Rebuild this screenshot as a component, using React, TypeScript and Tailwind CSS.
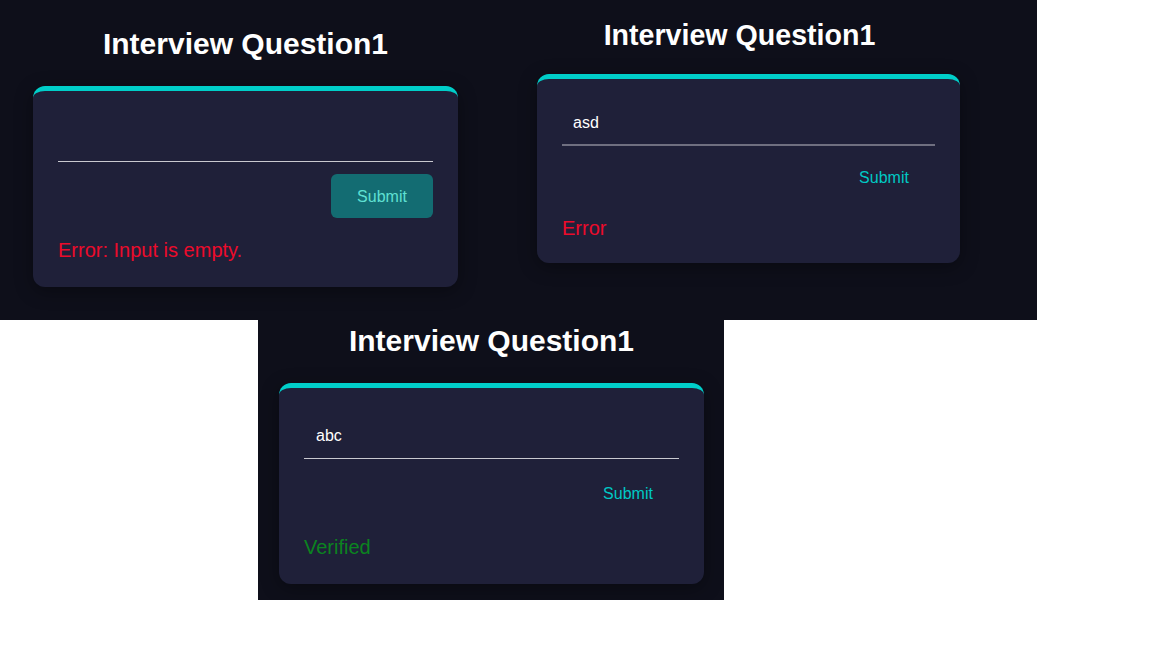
const font = { fontFamily: '"Liberation Sans", Arial, sans-serif' };

type CardProps = {
  value: string;
  message: string;
  tone: "error" | "ok";
  hover?: boolean;
  small?: boolean;
};

const Card = ({ value, message, tone, hover, small }: CardProps) => {
  return (
    <div
      className={
        "flex flex-col rounded-xl border-t-[5px] border-[#00cec9] bg-[#1f2039] px-[25px] shadow-[0_4px_18px_rgba(0,0,0,0.35)] " +
        (small ? "w-[423px] pt-[17px] pb-[23px]" : "w-[425px] pt-5 pb-[25px]")
      }
    >
      <input
        readOnly
        value={value}
        className={
          "w-full bg-transparent px-3 pt-[5px] text-[16px] text-white outline-none " +
          (small
            ? "h-[50px] border-b-2 border-[#6f6f80] px-[11px] text-[15px] text-[#e8e8ee]"
            : "h-[51px] border-b border-[#c9c9d0]")
        }
        style={font}
      />
      <button
        className={
          "self-end w-[102px] rounded-md pt-[2px] text-[16px] " +
          (small ? "mt-[10px] h-[42px] text-[15px]" : "mt-3 h-[44px]") +
          (hover ? " bg-[#136c72] text-[#5fe0d2]" : " bg-transparent text-[#00c9c4]")
        }
        style={font}
      >
        Submit
      </button>
      <p
        className={
          "text-[20px] leading-[23px] " +
          (small ? "mt-[19px]" : "mt-[21px]") +
          (tone === "error" ? " text-[#ec0b2b]" : " text-[#0b8420]")
        }
        style={font}
      >
        {message}
      </p>
    </div>
  );
};

const Title = ({ className }: { className: string }) => (
  <h2 className={"font-bold text-white " + className} style={font}>
    Interview Question1
  </h2>
);

export default function App() {
  return (
    <div className="w-[1152px] h-[648px] bg-white overflow-hidden">
      <div className="flex w-[1037px] h-[320px] bg-[#0e0f1a]">
        <div className="flex flex-col pl-[33px] pt-[26px] w-[491px]">
          <Title className="w-[425px] text-center text-[30px] leading-[36px] mb-[24px]" />
          <Card value="" message="Error: Input is empty." tone="error" hover />
        </div>
        <div className="flex flex-col ml-[46px] pt-[18px]">
          <Title className="w-[405px] text-center text-[28.6px] leading-[35px] mb-[21px]" />
          <Card value="asd" message="Error" tone="error" small />
        </div>
      </div>
      <div className="flex flex-col w-[466px] h-[280px] ml-[258px] bg-[#0e0f1a] pl-[21px] pt-[3px] overflow-hidden">
        <Title className="w-[425px] text-center text-[30px] leading-[36px] mb-[24px]" />
        <Card value="abc" message="Verified" tone="ok" />
      </div>
    </div>
  );
}
